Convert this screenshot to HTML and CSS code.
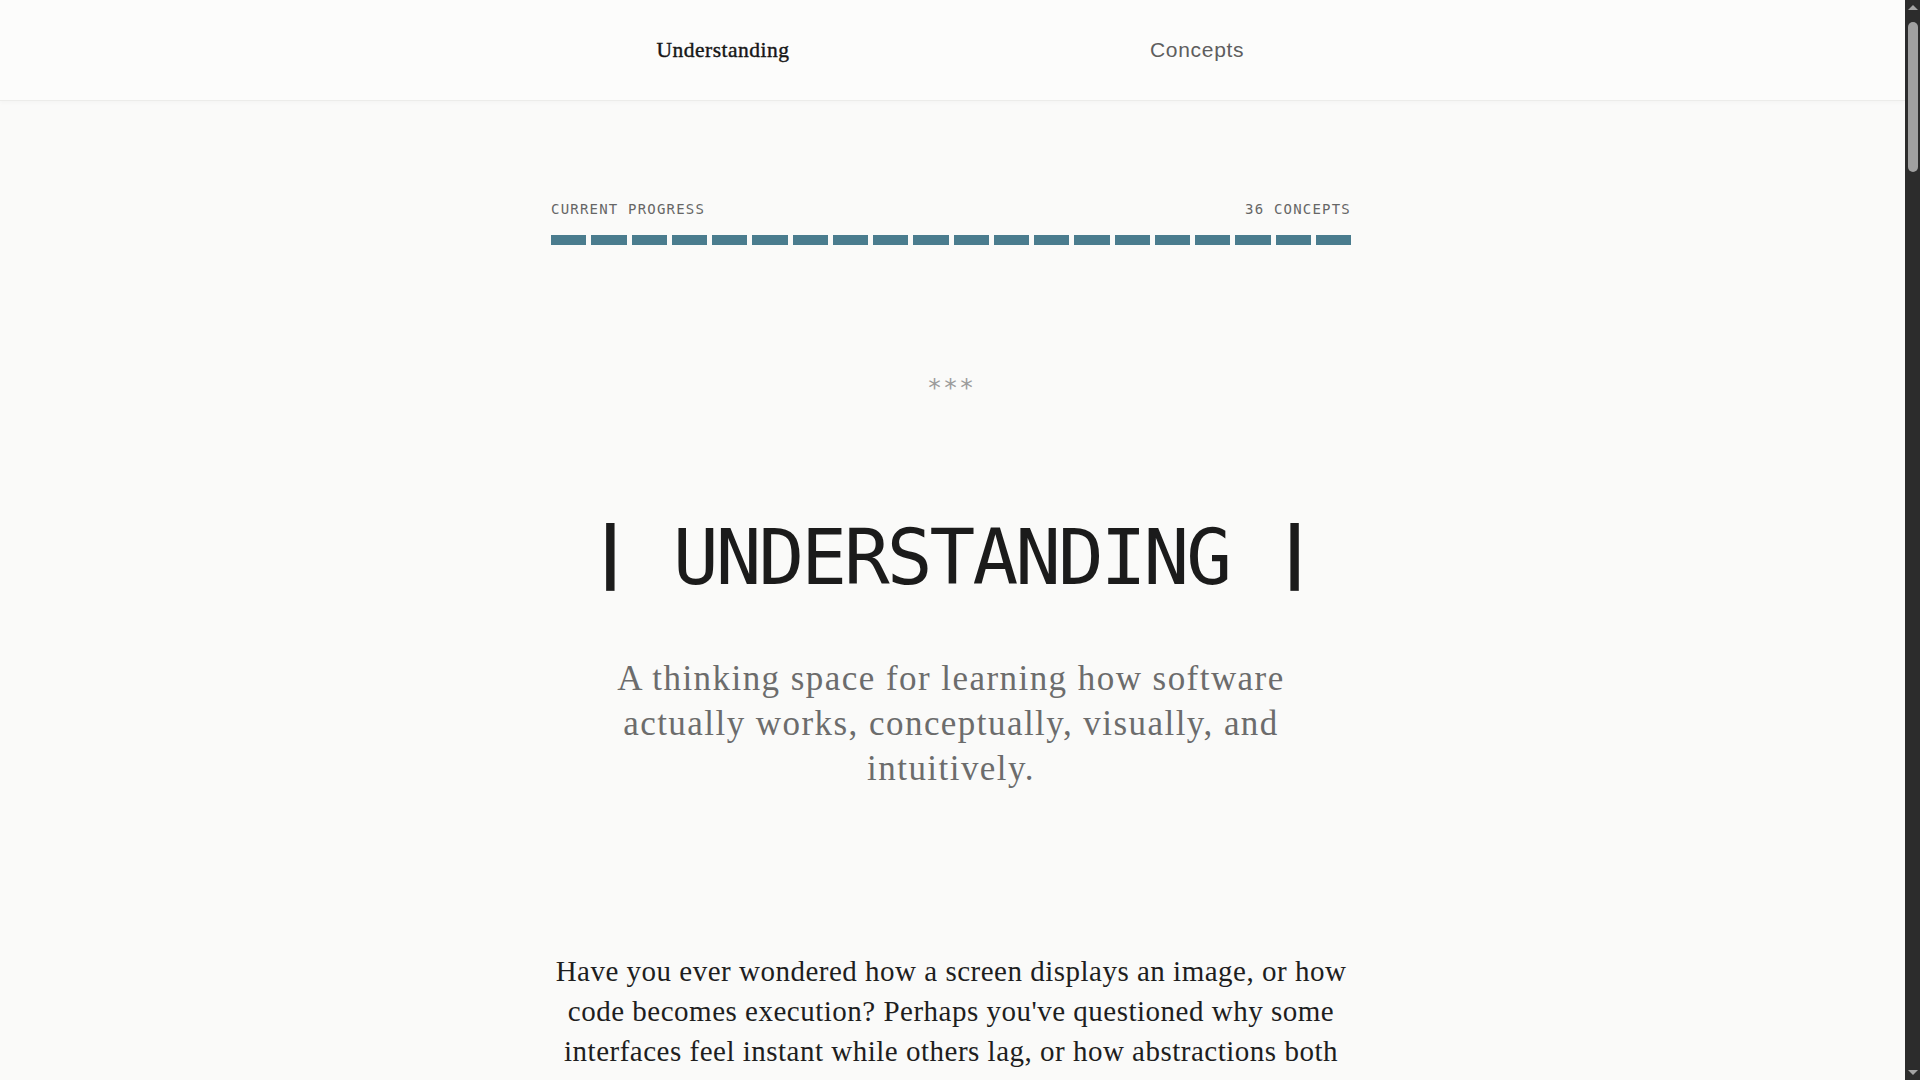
FILE: index.html
```html
<!DOCTYPE html>
<html lang="en">
<head>
<meta charset="utf-8">
<title>Understanding</title>
<link rel="stylesheet" href="styles.css">
</head>
<body>
<div class="viewport">
  <header class="site-header">
    <nav class="nav">
      <a class="nav-link nav-link--active" href="#">Understanding</a>
      <a class="nav-link nav-link--muted" href="#">Concepts</a>
    </nav>
  </header>
  <main class="page">
    <section class="progress">
      <div class="progress-labels">
        <span>CURRENT PROGRESS</span>
        <span>36 CONCEPTS</span>
      </div>
      <div class="progress-bar">
        <span class="seg"></span><span class="seg"></span><span class="seg"></span><span class="seg"></span><span class="seg"></span>
        <span class="seg"></span><span class="seg"></span><span class="seg"></span><span class="seg"></span><span class="seg"></span>
        <span class="seg"></span><span class="seg"></span><span class="seg"></span><span class="seg"></span><span class="seg"></span>
        <span class="seg"></span><span class="seg"></span><span class="seg"></span><span class="seg"></span><span class="seg"></span>
      </div>
    </section>

    <div class="divider">***</div>

    <h1 class="title"><span class="pipe">|</span> UNDERSTANDING <span class="pipe">|</span></h1>

    <p class="subtitle">A thinking space for learning how software actually works, conceptually, visually, and intuitively.</p>

    <section class="intro">
      <p>Have you ever wondered how a screen displays an image, or how code becomes execution? Perhaps you've questioned why some interfaces feel instant while others lag, or how abstractions both help and hide what is really happening underneath.</p>
      <p>This is a place to slow down and look closely. Each concept is explored from first principles, with diagrams, small experiments and plain language.</p>
    </section>
  </main>
</div>
<div class="scrollbar" aria-hidden="true">
  <span class="sb-arrow sb-arrow--up"></span>
  <span class="sb-thumb"></span>
  <span class="sb-track"></span>
  <span class="sb-arrow sb-arrow--down"></span>
</div>
</body>
</html>
```

FILE: styles.css
```css
html {
  background: #fafaf9;
}

body {
  margin: 0;
  height: 100vh;
  overflow: hidden;
  display: flex;
  background: #fafaf9;
  color: #1c1c1c;
  font-family: "Liberation Serif", "Times New Roman", serif;
}

.viewport {
  flex: 1;
  min-width: 0;
  height: 100vh;
  overflow: hidden;
}

/* drawn scrollbar */
.scrollbar {
  width: 15px;
  flex: none;
  height: 100vh;
  background: #2c2c2c;
  display: flex;
  flex-direction: column;
  align-items: center;
}

.sb-arrow {
  flex: none;
  width: 0;
  height: 0;
  border-left: 5px solid transparent;
  border-right: 5px solid transparent;
}

.sb-arrow--up {
  margin-top: 5px;
  border-bottom: 5px solid #a3a3a3;
}

.sb-arrow--down {
  margin-bottom: 5px;
  border-top: 5px solid #a3a3a3;
}

.sb-thumb {
  flex: none;
  margin-top: 12px;
  width: 10px;
  height: 150px;
  border-radius: 5px;
  background: #a0a0a0;
}

.sb-track {
  flex: 1;
}

/* header */
.site-header {
  height: 100px;
  background: #fcfcfb;
  border-bottom: 1px solid #ececea;
  box-shadow: 0 2px 4px rgba(0, 0, 0, 0.025);
  display: flex;
  align-items: center;
  justify-content: center;
}

.nav {
  display: flex;
  align-items: center;
  justify-content: center;
  gap: 360px;
  padding-right: 5px;
}

.nav-link {
  text-decoration: none;
  text-align: center;
  white-space: nowrap;
}

.nav-link--active {
  width: 134px;
  font-family: "Liberation Serif", serif;
  font-size: 21.5px;
  letter-spacing: 0.5px;
  color: #161616;
  -webkit-text-stroke: 0.4px #161616;
}

.nav-link--muted {
  width: 94px;
  font-family: "Liberation Sans", Arial, sans-serif;
  font-size: 21px;
  letter-spacing: 0.7px;
  color: #5e5e5e;
}

/* main */
.page {
  max-width: 800px;
  margin: 0 auto;
  padding-right: 3px;
}

.progress {
  margin-top: 99px;
}

.progress-labels {
  display: flex;
  justify-content: space-between;
  font-family: "DejaVu Sans Mono", monospace;
  font-size: 14px;
  line-height: 18px;
  letter-spacing: 1.2px;
  color: #666666;
}

.progress-bar {
  margin-top: 17px;
  display: flex;
  gap: 5px;
}

.seg {
  flex: 1;
  height: 10px;
  background: #4a7c8e;
}

.divider {
  margin-top: 131px;
  text-align: center;
  font-family: "DejaVu Sans Mono", monospace;
  font-size: 25px;
  line-height: 24px;
  letter-spacing: 1px;
  color: #9c9c9c;
}

.title {
  margin: 120px 0 0;
  text-align: center;
  font-family: "DejaVu Sans Mono", monospace;
  font-weight: normal;
  font-size: 76px;
  line-height: 76px;
  letter-spacing: -3px;
  color: #1b1b1b;
}

.pipe {
  display: inline-block;
  font-weight: bold;
  transform: translateY(-6px) scaleY(0.9);
}

.subtitle {
  max-width: 720px;
  margin: 60px auto 0;
  text-align: center;
  font-size: 35px;
  line-height: 45px;
  letter-spacing: 1.45px;
  color: #6c6c6c;
}

.intro {
  margin-top: 160px;
  text-align: center;
  font-size: 29px;
  line-height: 40px;
  letter-spacing: 0.5px;
  color: #1e1e1e;
}

.intro p {
  margin: 0 0 40px;
}
```
